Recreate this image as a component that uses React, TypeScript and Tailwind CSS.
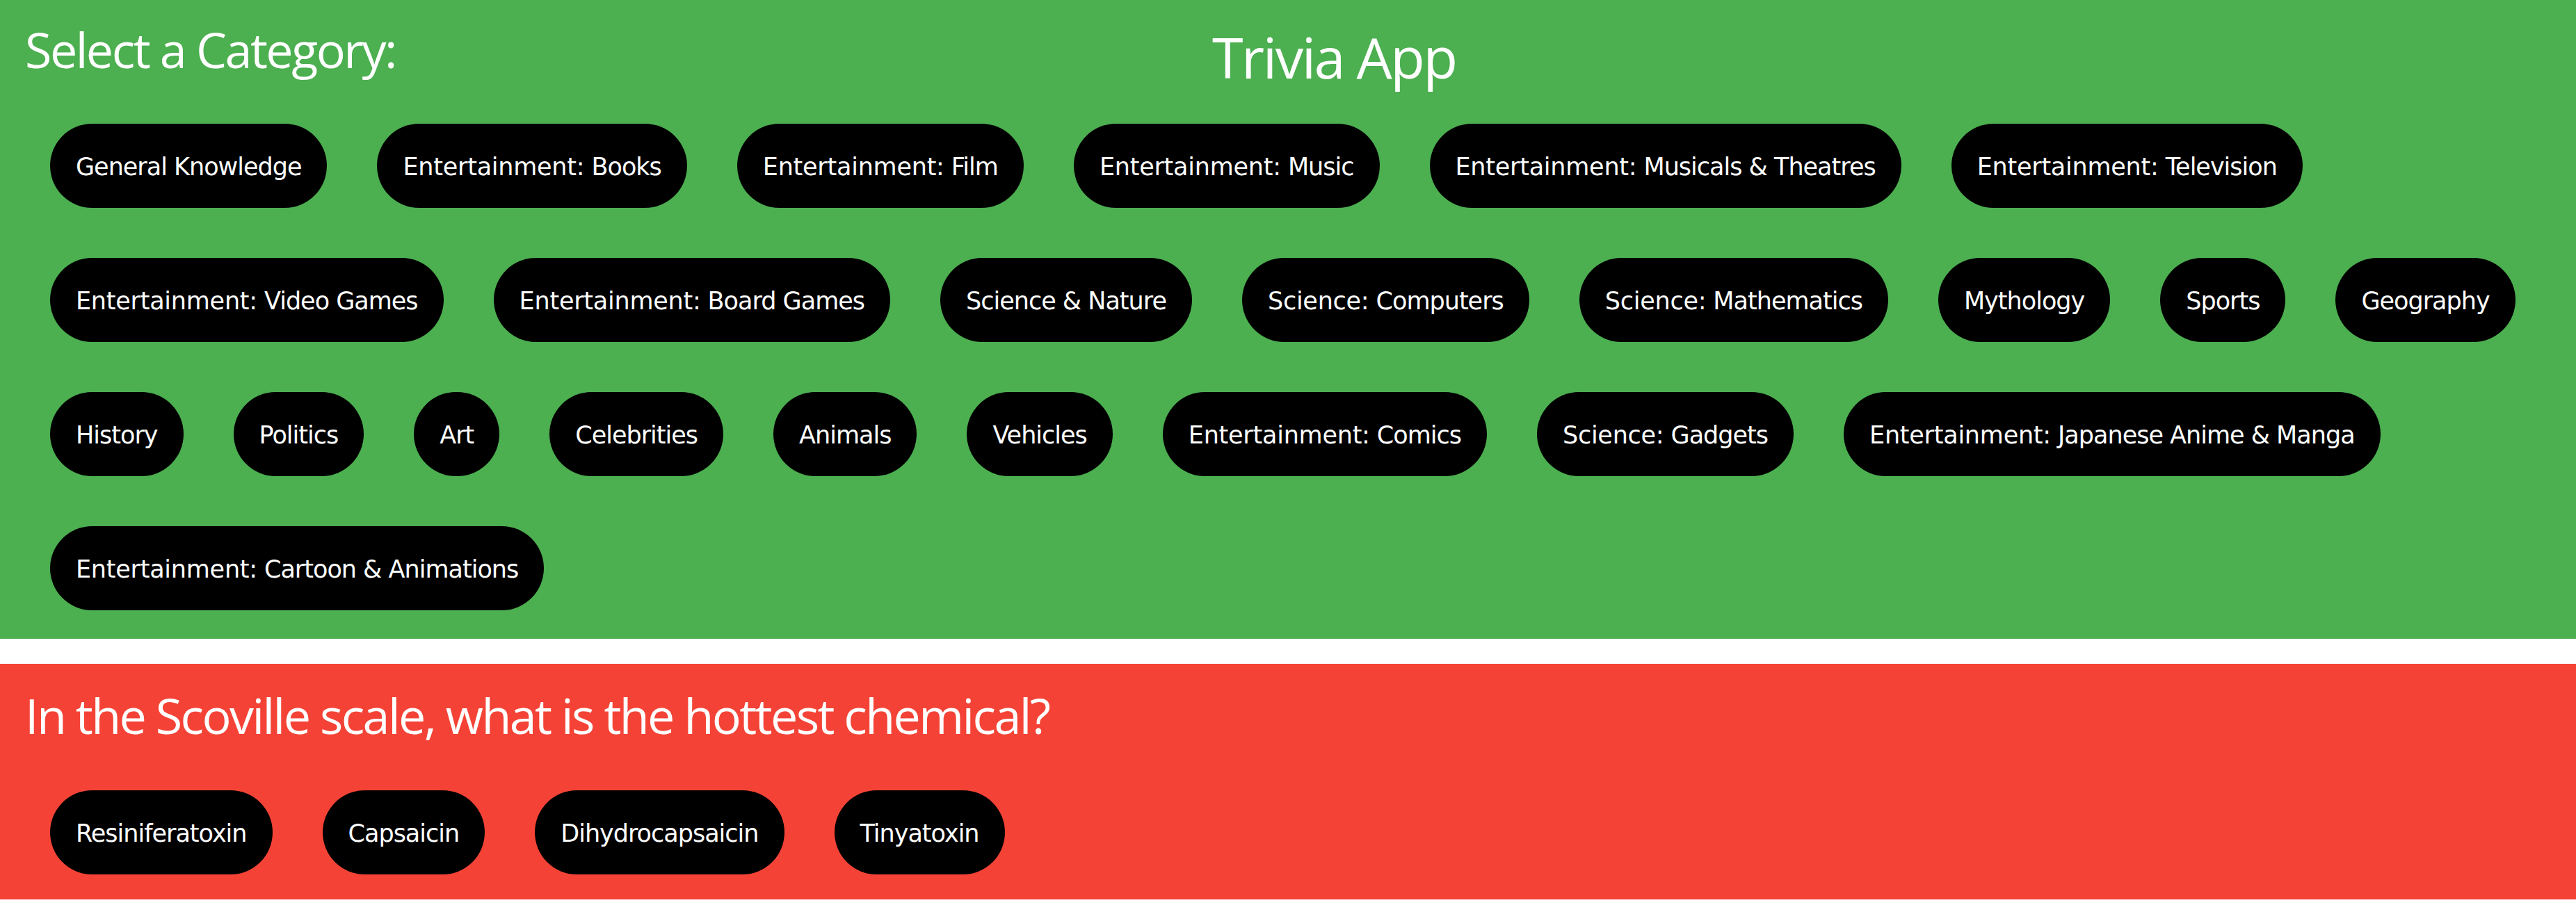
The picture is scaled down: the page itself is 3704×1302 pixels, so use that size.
const categories = [
  "General Knowledge",
  "Entertainment: Books",
  "Entertainment: Film",
  "Entertainment: Music",
  "Entertainment: Musicals & Theatres",
  "Entertainment: Television",
  "Entertainment: Video Games",
  "Entertainment: Board Games",
  "Science & Nature",
  "Science: Computers",
  "Science: Mathematics",
  "Mythology",
  "Sports",
  "Geography",
  "History",
  "Politics",
  "Art",
  "Celebrities",
  "Animals",
  "Vehicles",
  "Entertainment: Comics",
  "Science: Gadgets",
  "Entertainment: Japanese Anime & Manga",
  "Entertainment: Cartoon & Animations",
];

const answers = ["Resiniferatoxin", "Capsaicin", "Dihydrocapsaicin", "Tinyatoxin"];

function PillButton({ label }: { label: string }) {
  // the "Entertainment:" / "Science:" prefix runs a touch wider in the original font
  const idx = label.indexOf(": ");
  const prefix = idx >= 0 ? label.slice(0, idx + 1) : "";
  const rest = idx >= 0 ? label.slice(idx + 1) : label;
  return (
    <button className="m-[36px] h-[121px] px-[37px] pt-[3px] inline-flex items-center justify-center rounded-full bg-black text-white font-['DejaVu_Sans',sans-serif] text-[35px] tracking-[-1px] whitespace-pre">
      {prefix && <span className="tracking-[-0.25px]">{prefix}</span>}
      {rest}
    </button>
  );
}

export default function App() {
  return (
    <div className="min-h-screen bg-white font-['Open_Sans','Noto_Sans',sans-serif] text-white">
      {/* Category picker */}
      <section className="bg-[#4CAF50] pt-[36px] px-[36px] pb-[5px] mb-[36px]">
        <div className="grid grid-cols-[1707px_1fr] items-start">
          <h2 className="text-[70px] leading-none font-normal tracking-[-2.5px]">
            Select a Category:
          </h2>
          <h1 className="mt-[5px] text-[81px] leading-none font-normal tracking-[-2.5px]">
            Trivia App
          </h1>
        </div>
        <div className="mt-[20px] flex flex-wrap">
          {categories.map((c) => (
            <PillButton key={c} label={c} />
          ))}
        </div>
      </section>

      {/* Question */}
      <section className="bg-[#F44336] pt-[39px] px-[36px]">
        <h2 className="text-[70px] leading-none font-normal tracking-[-2.6px]">
          In the Scoville scale, what is the hottest chemical?
        </h2>
        <div className="mt-[37px] flex flex-wrap">
          {answers.map((a) => (
            <PillButton key={a} label={a} />
          ))}
        </div>
      </section>
    </div>
  );
}
